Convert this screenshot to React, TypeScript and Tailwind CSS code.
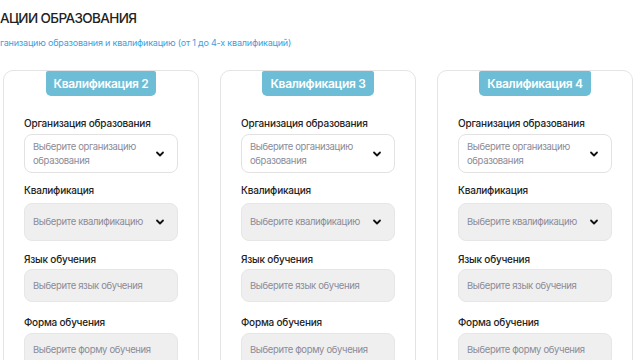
import React from "react";

const Chevron = () => (
  <svg width="10" height="10" viewBox="0 0 10 10" className="shrink-0">
    <path d="M2 3.5 L5 6.5 L8 3.5" fill="none" stroke="#111" strokeWidth="1.8" strokeLinecap="round" strokeLinejoin="round" />
  </svg>
);

const label = "text-[10px] leading-[16px] text-[#222] font-medium tracking-[-0.2px]";
const ph = "text-[9.5px] leading-[14px] text-[#8b8b98] tracking-[-0.35px]";

function Card({ n }: { n: number }) {
  return (
    <div className="w-[196px] shrink-0 h-[300px] border border-[#e4e4e4] rounded-[10px] bg-white px-[20px] relative">
      <div className="flex justify-center">
        <div className="h-[25px] px-[8px] bg-[#6cbdd5] rounded-b-[5px] rounded-t-[2px] text-white text-[12px] font-semibold tracking-[-0.3px] flex items-center leading-none">
          Квалификация {n}
        </div>
      </div>
      <div className={`mt-[19px] ${label}`}>Организация образования</div>
      <div className="mt-[3px] h-[39px] border border-[#e2e2e2] rounded-[8px] bg-white flex items-center justify-between pl-[8px] pr-[12px]">
        <div className={ph}>Выберите организацию<br />образования</div>
        <Chevron />
      </div>
      <div className={`mt-[9px] ${label}`}>Квалификация</div>
      <div className="mt-[5px] h-[38px] border border-[#e6e6e6] rounded-[8px] bg-[#efefef] flex items-center justify-between pl-[8px] pr-[12px]">
        <div className={ph}>Выберите квалификацию</div>
        <Chevron />
      </div>
      <div className={`mt-[10px] ${label}`}>Язык обучения</div>
      <div className="mt-[2px] h-[33px] border border-[#e6e6e6] rounded-[8px] bg-[#efefef] flex items-center pl-[8px]">
        <div className={ph}>Выберите язык обучения</div>
      </div>
      <div className={`mt-[12px] ${label}`}>Форма обучения</div>
      <div className="mt-[3px] h-[33px] border border-[#e6e6e6] rounded-[8px] bg-[#efefef] flex items-center pl-[8px]">
        <div className={ph}>Выберите форму обучения</div>
      </div>
    </div>
  );
}

export default function App() {
  return (
    <div className="w-[640px] h-[360px] overflow-hidden bg-white" style={{ fontFamily: "Inter, 'Noto Sans', sans-serif" }}>
      <div className="pt-[9px] text-[13.5px] leading-[18px] text-[#222] font-medium tracking-[-0.6px]">АЦИИ ОБРАЗОВАНИЯ</div>
      <div className="mt-[9px] text-[9px] leading-[14px] text-[#3d9ee0] tracking-[-0.2px]">ганизацию образования и квалификацию (от 1 до 4-х квалификаций)</div>
      <div className="mt-[20px] flex gap-[21px] pl-[3px]">
        <Card n={2} />
        <Card n={3} />
        <Card n={4} />
      </div>
    </div>
  );
}
